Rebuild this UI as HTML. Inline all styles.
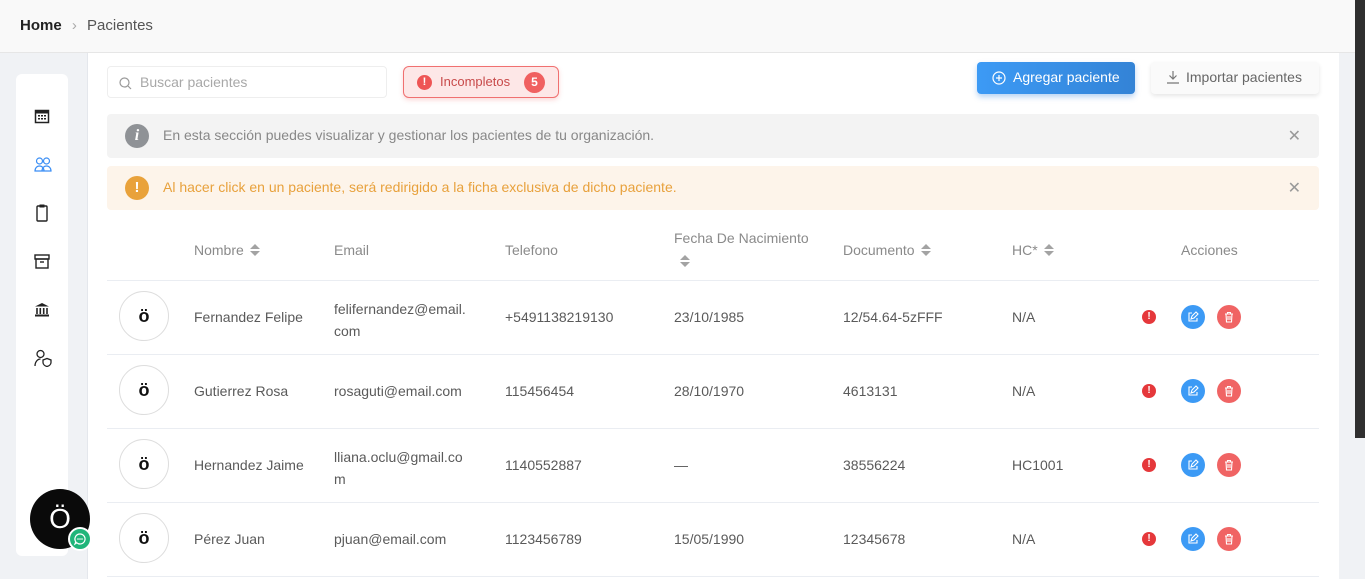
<!DOCTYPE html>
<html><head><meta charset="utf-8"><style>
*{box-sizing:border-box;margin:0;padding:0}
body{width:1365px;height:579px;overflow:hidden;background:#f0f2f5;font-family:"Liberation Sans",sans-serif;position:relative;color:#5c5c5c}
.hdr{position:absolute;left:0;top:0;width:1355px;height:53px;background:#f9f9f9;border-bottom:1px solid #e6e6e6}
.hdr .b{position:absolute;left:20px;top:17px;font-size:15px;color:#333}
.sb{position:absolute;left:1355px;top:0;width:10px;height:438px;background:#2f2f2f}
.side{position:absolute;left:16px;top:74px;width:52px;height:482px;background:#fff;border-radius:6px}
.side svg{position:absolute;left:18px}
.main{position:absolute;left:87px;top:53px;width:1252px;height:526px;background:#fff;border-left:1px solid #e4e7ec}
.abs{position:absolute}
.search{left:107px;top:66px;width:280px;height:32px;border:1px solid #eee;border-radius:4px;font-size:14px;color:#a8a8a8;padding:7px 0 0 32px}
.inc{left:403px;top:66px;width:156px;height:32px;border:1px solid #f07070;background:#fde7e7;border-radius:6px;font-size:13px;color:#c84a4a;box-shadow:0 2px 5px rgba(240,100,100,.25)}
.btn1{left:977px;top:62px;width:158px;height:32px;border-radius:4px;background:linear-gradient(90deg,#3c9af5,#3383d6);color:#fff;font-size:14px;box-shadow:0 3px 6px rgba(50,130,220,.35)}
.btn2{left:1151px;top:62px;width:168px;height:32px;border-radius:4px;background:#fafafa;color:#666;font-size:14px;box-shadow:0 2px 5px rgba(0,0,0,.1)}
.al{left:107px;width:1212px;height:44px;border-radius:4px;font-size:14px}
.x{position:absolute;right:18px;top:12px;font-size:16px;color:#999}
.th{top:242px;font-size:14px;color:#8a8a8a}
.line{position:absolute;left:107px;width:1212px;height:1px;background:#eaedf2}
.row{position:absolute;left:107px;width:1212px;height:74px;font-size:14px;color:#5a5a5a}
.row .c{position:absolute}
.av{left:12px;width:50px;height:50px;border:1px solid #ddd;border-radius:50%;text-align:center;line-height:48px;color:#111;font-size:18px;font-weight:bold}
.ic{position:absolute;width:24px;height:24px;border-radius:50%}
.sort{display:inline-block;width:10px;height:13px;vertical-align:-1px;margin-left:6px;background:
linear-gradient(to top right,transparent 50%,#a3a3a3 50%) 0 0/5px 5px no-repeat}
</style></head><body>
<div class="hdr"><div class="b"><b style="color:#222">Home</b> <span style="color:#aaa;margin:0 6px">›</span> <span style="color:#555">Pacientes</span></div></div>
<div class="sb"></div>
<div class="main"></div>
<div class="side">
<svg style="top:34px" width="16" height="16" viewBox="0 0 16 16"><rect x="1.5" y="2.5" width="13" height="12" fill="none" stroke="#222" stroke-width="1.5"/><rect x="1.5" y="2.5" width="13" height="3" fill="#222"/><g fill="#222"><rect x="4" y="7" width="2" height="1.5"/><rect x="7" y="7" width="2" height="1.5"/><rect x="10" y="7" width="2" height="1.5"/><rect x="4" y="10" width="2" height="1.5"/><rect x="7" y="10" width="2" height="1.5"/><rect x="10" y="10" width="2" height="1.5"/></g></svg>
<svg style="top:82px" width="18" height="16" viewBox="0 0 18 16"><g fill="none" stroke="#3a8ef5" stroke-width="1.2"><circle cx="5.5" cy="5" r="3"/><circle cx="12.5" cy="5" r="3"/><path d="M1 15c0-3 2-5 4.5-5S10 12 10 15zM8 15c0-3 2-5 4.5-5S17 12 17 15z"/></g></svg>
<svg style="top:130px;left:20px" width="12" height="18" viewBox="0 0 12 18"><rect x="1" y="2" width="10" height="15" rx="1" fill="none" stroke="#222" stroke-width="1.4"/><rect x="3.5" y="0.5" width="5" height="3" fill="#222"/></svg>
<svg style="top:180px" width="16" height="15" viewBox="0 0 16 15"><rect x="1" y="1" width="14" height="4" fill="none" stroke="#222" stroke-width="1.4"/><rect x="2" y="5" width="12" height="9" fill="none" stroke="#222" stroke-width="1.4"/><path d="M6 8h4" stroke="#222" stroke-width="1.4"/></svg>
<svg style="top:228px" width="16" height="15" viewBox="0 0 16 15"><path d="M8 1L1 4.5h14z" fill="#222"/><g stroke="#222" stroke-width="1.6"><path d="M3 6v6M6.3 6v6M9.7 6v6M13 6v6"/></g><rect x="1" y="12.5" width="14" height="2" fill="#222"/></svg>
<svg style="top:275px" width="18" height="18" viewBox="0 0 18 18"><g fill="none" stroke="#222" stroke-width="1.3"><circle cx="6.5" cy="5" r="3.5"/><path d="M1 17c0-4 2.5-7 5.5-7M9 11l4-1.5 4 1.5v2.5c0 2-2 3.5-4 4-2-.5-4-2-4-4z"/></g></svg>
</div>
<div class="abs" style="left:30px;top:489px;width:60px;height:60px;border-radius:50%;background:#0a0a0a;color:#fff;font-size:28px;text-align:center;line-height:60px">Ö</div>
<div class="abs" style="left:68px;top:527px;width:24px;height:24px;border-radius:50%;background:#1fb57a;border:2px solid #fff"><svg width="20" height="20" viewBox="0 0 20 20"><path d="M10 5a5 5 0 1 1-3.2 8.8L5 15l.8-2.2A5 5 0 0 1 10 5z" fill="none" stroke="#fff" stroke-width="1.2"/><g fill="#fff"><circle cx="8" cy="10" r=".8"/><circle cx="10" cy="10" r=".8"/><circle cx="12" cy="10" r=".8"/></g></svg></div>

<div class="abs search"><svg class="abs" style="left:11px;top:10px" width="13" height="13" viewBox="0 0 13 13"><circle cx="5.5" cy="5.5" r="4.5" fill="none" stroke="#999" stroke-width="1.2"/><path d="M9 9l3 3" stroke="#999" stroke-width="1.2"/></svg>Buscar pacientes</div>
<div class="abs inc"><span class="abs" style="left:13px;top:8px;width:15px;height:15px;border-radius:50%;background:#ee5555;color:#fff;font-size:11px;font-weight:bold;text-align:center;line-height:15px">!</span><span class="abs" style="left:36px;top:7px">Incompletos</span><span class="abs" style="left:120px;top:5px;width:21px;height:21px;border-radius:50%;background:#f06060;color:#fff;font-size:12px;font-weight:bold;text-align:center;line-height:21px">5</span></div>
<div class="abs btn1"><svg class="abs" style="left:15px;top:9px" width="14" height="14" viewBox="0 0 14 14"><circle cx="7" cy="7" r="6" fill="none" stroke="#fff" stroke-width="1.2"/><path d="M7 4v6M4 7h6" stroke="#fff" stroke-width="1.2"/></svg><span class="abs" style="left:36px;top:7px">Agregar paciente</span></div>
<div class="abs btn2"><svg class="abs" style="left:15px;top:8px" width="14" height="14" viewBox="0 0 14 14"><path d="M7 1v8M3.5 5.5L7 9l3.5-3.5M1 13h12" fill="none" stroke="#777" stroke-width="1.2"/></svg><span class="abs" style="left:35px;top:7px">Importar pacientes</span></div>

<div class="abs al" style="top:114px;background:#f3f3f3;color:#888"><span class="abs" style="left:18px;top:10px;width:24px;height:24px;border-radius:50%;background:#8f9296;color:#fff;font:italic bold 16px 'Liberation Serif',serif;text-align:center;line-height:24px">i</span><span class="abs" style="left:56px;top:13px">En esta sección puedes visualizar y gestionar los pacientes de tu organización.</span><span class="x">✕</span></div>
<div class="abs al" style="top:166px;background:#fdf4ea;color:#e8a13c"><span class="abs" style="left:18px;top:10px;width:24px;height:24px;border-radius:50%;background:#e9a23b;color:#fff;font-weight:bold;font-size:15px;text-align:center;line-height:24px">!</span><span class="abs" style="left:56px;top:13px">Al hacer click en un paciente, será redirigido a la ficha exclusiva de dicho paciente.</span><span class="x">✕</span></div>

<svg width="0" height="0" style="position:absolute"><defs><g id="s"><path d="M0 5L5 0L10 5z M0 7L5 12L10 7z" fill="#a3a3a3"/></g></defs></svg>
<div class="abs th" style="left:194px">Nombre<svg width="16" height="12" style="vertical-align:-1px"><use href="#s" x="6"/></svg></div>
<div class="abs th" style="left:334px">Email</div>
<div class="abs th" style="left:505px">Telefono</div>
<div class="abs th" style="left:674px;top:230px">Fecha De Nacimiento</div>
<svg class="abs" style="left:680px;top:255px" width="10" height="12"><use href="#s"/></svg>
<div class="abs th" style="left:843px">Documento<svg width="16" height="12" style="vertical-align:-1px"><use href="#s" x="6"/></svg></div>
<div class="abs th" style="left:1012px">HC*<svg width="16" height="12" style="vertical-align:-1px"><use href="#s" x="6"/></svg></div>
<div class="abs th" style="left:1181px">Acciones</div>

<div class="line" style="top:280px"></div>
<div class="line" style="top:354px"></div>
<div class="line" style="top:428px"></div>
<div class="line" style="top:502px"></div>
<div class="line" style="top:576px"></div>

<div class="row" style="top:280px"><div class="c av" style="top:11px">ö</div><div class="c" style="left:87px;top:29px">Fernandez Felipe</div><div class="c" style="left:227px;top:18px;line-height:22px">felifernandez@email.<br>com</div><div class="c" style="left:398px;top:29px">+5491138219130</div><div class="c" style="left:567px;top:29px">23/10/1985</div><div class="c" style="left:736px;top:29px">12/54.64-5zFFF</div><div class="c" style="left:905px;top:29px">N/A</div></div>
<div class="row" style="top:354px"><div class="c av" style="top:11px">ö</div><div class="c" style="left:87px;top:29px">Gutierrez Rosa</div><div class="c" style="left:227px;top:29px">rosaguti@email.com</div><div class="c" style="left:398px;top:29px">115456454</div><div class="c" style="left:567px;top:29px">28/10/1970</div><div class="c" style="left:736px;top:29px">4613131</div><div class="c" style="left:905px;top:29px">N/A</div></div>
<div class="row" style="top:428px"><div class="c av" style="top:11px">ö</div><div class="c" style="left:87px;top:29px">Hernandez Jaime</div><div class="c" style="left:227px;top:18px;line-height:22px">lliana.oclu@gmail.co<br>m</div><div class="c" style="left:398px;top:29px">1140552887</div><div class="c" style="left:567px;top:29px">—</div><div class="c" style="left:736px;top:29px">38556224</div><div class="c" style="left:905px;top:29px">HC1001</div></div>
<div class="row" style="top:502px"><div class="c av" style="top:11px">ö</div><div class="c" style="left:87px;top:29px">Pérez Juan</div><div class="c" style="left:227px;top:29px">pjuan@email.com</div><div class="c" style="left:398px;top:29px">1123456789</div><div class="c" style="left:567px;top:29px">15/05/1990</div><div class="c" style="left:736px;top:29px">12345678</div><div class="c" style="left:905px;top:29px">N/A</div></div>

<div id="acts"></div>
<script>
var h='';[317,391,465,539].forEach(function(y){
h+='<div class="ic" style="left:1142px;top:'+(y-7)+'px;width:14px;height:14px;background:#e5383b;color:#fff;font-size:10px;font-weight:bold;text-align:center;line-height:14px">!</div>';
h+='<div class="ic" style="left:1181px;top:'+(y-12)+'px;background:#3c9af5"><svg width="24" height="24" viewBox="0 0 24 24"><path d="M11 8H8v8h8v-3M10 14l1-3 4-4 2 2-4 4z" fill="none" stroke="#fff" stroke-width="1.1"/></svg></div>';
h+='<div class="ic" style="left:1217px;top:'+(y-12)+'px;background:#f06464"><svg width="24" height="24" viewBox="0 0 24 24"><path d="M8 9h8M10.5 9V7.5h3V9M9 9l.5 8h5l.5-8M11 11v4M13 11v4" fill="none" stroke="#fff" stroke-width="1.1"/></svg></div>';
});document.getElementById('acts').innerHTML=h;
</script>
</body></html>
